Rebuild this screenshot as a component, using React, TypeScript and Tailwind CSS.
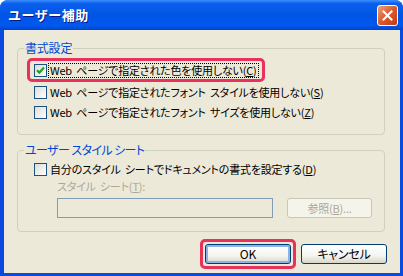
import { type ReactNode } from "react";

const font = "font-['Noto_Sans_CJK_JP','Liberation_Sans',sans-serif]";

function CheckBox({ checked }: { checked?: boolean }) {
  return (
    <span className="flex h-[13px] w-[13px] shrink-0 items-center justify-center border border-[#1C5180] bg-[linear-gradient(135deg,#DCDCD7,#FFFFFF)]">
      {checked && (
        <svg width="9" height="9" viewBox="0 0 9 9">
          <path d="M1 4.2 L3.4 6.6 L8 1.6" fill="none" stroke="#21A121" strokeWidth="2.2" />
        </svg>
      )}
    </span>
  );
}

function CheckRow({
  children,
  checked,
  focused,
}: {
  children: ReactNode;
  checked?: boolean;
  focused?: boolean;
}) {
  return (
    <div className="flex h-[20px] items-center whitespace-nowrap">
      <CheckBox checked={checked} />
      <span
        className={`ml-[1px] border px-[1px] leading-[13px] ${
          focused ? "border-dotted border-black" : "border-transparent"
        }`}
      >
        {children}
      </span>
    </div>
  );
}

function Group({
  title,
  children,
  className,
  legendClass,
}: {
  title: string;
  children: ReactNode;
  className?: string;
  legendClass?: string;
}) {
  return (
    <fieldset className={`ml-[13px] w-[368px] rounded-[4px] border border-[#D0D0BF] ${className ?? ""}`}>
      <legend
        className={`ml-[6px] px-[1px] text-[12px] leading-[14px] text-[#0046D5] [word-spacing:0] ${legendClass ?? ""}`}
      >
        {title}
      </legend>
      {children}
    </fieldset>
  );
}

function XpButton({ children, isDefault }: { children: ReactNode; isDefault?: boolean }) {
  return (
    <button
      className={`flex h-[20px] w-[86px] items-center justify-center rounded-[3px] border border-[#003C74] bg-[linear-gradient(180deg,#FFFFFF_0%,#F4F4F0_60%,#D8D4CA_100%)] text-[12px] leading-none text-black ${
        isDefault ? "shadow-[inset_0_0_0_2px_#8DB2E8]" : ""
      }`}
    >
      {children}
    </button>
  );
}

export default function App() {
  return (
    <div className={`flex h-[276px] w-[403px] flex-col overflow-hidden rounded-t-[8px] bg-[#0A4BDF] ${font} [font-feature-settings:'palt']`}>
      {/* title bar */}
      <div className="flex h-[30px] shrink-0 items-center bg-[linear-gradient(180deg,#3D8FFF_0%,#0A5FEC_12%,#0055E5_50%,#0058EE_85%,#0043D0_100%)] pl-[8px] pr-[5px]">
        <span className="flex-1 text-[13px] font-bold tracking-[0.5px] text-white [text-shadow:1px_1px_0_#0A1883] [font-feature-settings:normal]">
          ユーザー補助
        </span>
        <span className="flex h-[21px] w-[21px] items-center justify-center rounded-[3px] border border-white bg-[linear-gradient(135deg,#EBA07E_0%,#DA5A2F_50%,#C23A12_100%)]">
          <svg width="11" height="11" viewBox="0 0 11 11">
            <path d="M1.5 1.5 L9.5 9.5 M9.5 1.5 L1.5 9.5" stroke="white" strokeWidth="2" strokeLinecap="square" />
          </svg>
        </span>
      </div>

      {/* body */}
      <div className="ml-[4px] mr-[3px] mb-[3px] flex flex-1 flex-col bg-[#ECE9D8] pt-[11px] text-[11px] tracking-[-0.2px] text-black [word-spacing:2px]">
        <Group title="書式設定" className="pb-[12px]">
          <div className="ml-[9px] mt-[3px] w-fit rounded-[5px] border-[3px] border-[#E8325C] py-[1px] pl-[4px] pr-[3px]">
            <div className="-my-[2px]">
              <CheckRow checked focused>
                Web ページで指定された色を使用しない(<span className="underline">C</span>)
              </CheckRow>
            </div>
          </div>
          <div className="pl-[16px]">
            <CheckRow>
              Web ページで指定されたフォント スタイルを使用しない(<span className="underline">S</span>)
            </CheckRow>
            <CheckRow>
              Web ページで指定されたフォント サイズを使用しない(<span className="underline">Z</span>)
            </CheckRow>
          </div>
        </Group>

        <Group title="ユーザー スタイル シート" className="mt-[8px] pb-[13px]" legendClass="tracking-[-0.6px]">
          <div className="mt-[2px] pl-[16px]">
            <CheckRow>
              自分のスタイル シートでドキュメントの書式を設定する(<span className="underline">D</span>)
            </CheckRow>
          </div>
          <div className="pl-[39px]">
            <div className="h-[14px] leading-[14px] text-[#ACA899]">
              スタイル シート(<span className="underline">T</span>):
            </div>
            <div className="mt-[5px] flex items-center">
              <div className="h-[20px] w-[216px] border border-[#7F9DB9] bg-[#ECE9D8]" />
              <div className="ml-[14px] flex h-[20px] w-[85px] items-center justify-center rounded-[3px] border border-[#C9C7BA] bg-[#F5F4EA] leading-none text-[#ACA899]">
                参照(<span className="underline">B</span>)...
              </div>
            </div>
          </div>
        </Group>

        <div className="mt-[7px] flex items-center justify-end pr-[13px]">
          <div className="rounded-[5px] border-[3px] border-[#E8325C] p-[2px]">
            <XpButton isDefault>OK</XpButton>
          </div>
          <div className="ml-[5px]">
            <XpButton>キャンセル</XpButton>
          </div>
        </div>
      </div>
    </div>
  );
}
